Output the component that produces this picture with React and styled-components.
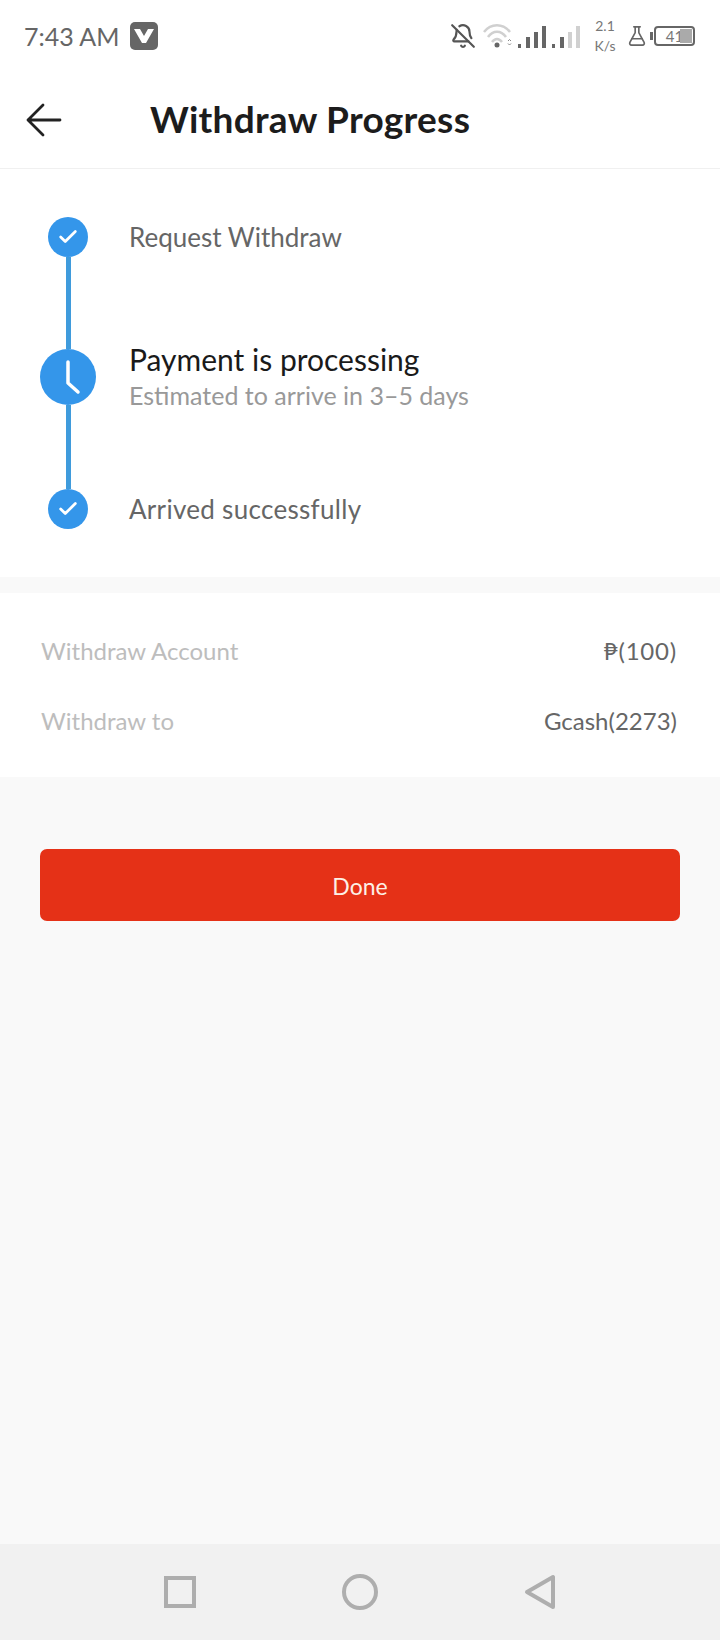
import React from 'react';
import styled, { createGlobalStyle } from 'styled-components';
import { BellOff, Check, FlaskConical } from 'lucide-react';

const GlobalStyle = createGlobalStyle`
  html, body {
    margin: 0;
    padding: 0;
    background: #fff;
  }
  * {
    box-sizing: border-box;
  }
`;

const Screen = styled.div`
  width: 720px;
  height: 1640px;
  display: flex;
  flex-direction: column;
  font-family: Lato, "Noto Sans", sans-serif;
  background: #f9f9f9;
  overflow: hidden;
`;

const StatusBar = styled.div`
  height: 76px;
  padding: 0 25px 4px 24px;
  background: #fff;
  display: flex;
  align-items: center;
  justify-content: space-between;
  color: #666;
`;

const StatusLeft = styled.div`
  display: flex;
  align-items: center;
  gap: 11px;
`;

const Clock = styled.span`
  font-size: 25px;
  font-weight: 400;
`;

const AppBadge = styled.div`
  width: 28px;
  height: 28px;
  border-radius: 5px;
  background: #666;
  display: flex;
  align-items: center;
  justify-content: center;
`;

const StatusRight = styled.div`
  display: flex;
  align-items: center;
`;

const Speed = styled.div`
  width: 24px;
  margin: 0 9px 0 12px;
  font-size: 14px;
  line-height: 20px;
  text-align: center;
  color: #777;
`;

const Battery = styled.div`
  position: relative;
  width: 41px;
  height: 20px;
  margin-left: 6px;
  border: 2px solid #666;
  border-radius: 4px;
  display: flex;
  justify-content: center;
  align-items: center;
  font-size: 15px;
  color: #777;

  &::before {
    content: '';
    position: absolute;
    left: -6px;
    top: 4px;
    width: 3px;
    height: 8px;
    background: #666;
  }

  &::after {
    content: '';
    position: absolute;
    right: 1px;
    top: 1px;
    bottom: 1px;
    width: 12px;
    background: #aaa;
  }
`;

const Header = styled.header`
  height: 93px;
  padding: 0 0 8px 25px;
  background: #fff;
  border-bottom: 1px solid #f0f0f0;
  display: flex;
  align-items: center;
`;

const BackButton = styled.button`
  width: 38px;
  height: 38px;
  margin-top: 4px;
  padding: 0;
  border: 0;
  background: none;
  color: #222;
  display: flex;
  align-items: center;
  justify-content: center;
`;

const Title = styled.h1`
  margin: 0 0 0 87px;
  font-size: 37px;
  font-weight: 700;
  letter-spacing: 0.25px;
  color: #1c1c1c;
`;

const StepsCard = styled.section`
  background: #fff;
  padding: 48px 40px 48px;
  display: flex;
  flex-direction: column;
`;

const Step = styled.div`
  display: flex;
  align-items: center;
  height: ${(p) => (p.$active ? 56 : 40)}px;
`;

const MarkerSlot = styled.div`
  width: 56px;
  margin-right: 33px;
  display: flex;
  justify-content: center;
  flex-shrink: 0;
`;

const Marker = styled.div`
  width: ${(p) => (p.$active ? 56 : 40)}px;
  height: ${(p) => (p.$active ? 56 : 40)}px;
  border-radius: 50%;
  background: #3496ea;
  display: flex;
  align-items: center;
  justify-content: center;
  color: #fff;
`;

const Connector = styled.div`
  width: 5px;
  height: ${(p) => p.$height}px;
  margin-left: 26px;
  background: #3f9bdc;
`;

const StepText = styled.div`
  display: flex;
  flex-direction: column;
`;

const StepLabel = styled.span`
  font-size: ${(p) => (p.$active ? 30 : 26)}px;
  line-height: 36px;
  color: ${(p) => (p.$active ? '#1a1a1a' : '#666')};
  letter-spacing: ${(p) => p.$spacing || 0}px;
`;

const StepHint = styled.span`
  font-size: 25px;
  line-height: 36px;
  color: #999;
`;

const InfoCard = styled.section`
  margin-top: 16px;
  padding: 22px 43px 22px 41px;
  background: #fff;
`;

const InfoRow = styled.div`
  height: 70px;
  display: flex;
  align-items: center;
  justify-content: space-between;
  font-size: 24px;
`;

const InfoKey = styled.span`
  color: #bdbdbd;
`;

const InfoValue = styled.span`
  color: #666;
  letter-spacing: ${(p) => p.$spacing || 0}px;
`;

const Content = styled.main`
  flex: 1;
  padding: 72px 40px 0;
`;

const DoneButton = styled.button`
  width: 640px;
  height: 72px;
  padding: 2px 0 0;
  border: 0;
  border-radius: 7px;
  background: #e53117;
  color: #fdf0e6;
  font-family: inherit;
  font-size: 23px;
`;

const NavBar = styled.nav`
  height: 96px;
  padding: 0 90px;
  background: #f1f1f1;
  display: grid;
  grid-template-columns: repeat(3, 1fr);
  place-items: center;
`;

const NavIcon = styled.svg`
  width: 40px;
  height: 40px;
  fill: none;
  stroke: #aeaeae;
  stroke-width: 4;
`;

const WifiSignal = () => (
  <svg width="98" height="24" viewBox="0 0 98 24" fill="none">
    <path d="M1 8 C8 -1 20 -1 27 8" stroke="#d0d0d0" strokeWidth="2.5" />
    <path d="M5 13 C10 6 18 6 23 13" stroke="#d0d0d0" strokeWidth="2.5" />
    <path d="M9 18 C12 14 16 14 19 18" stroke="#d0d0d0" strokeWidth="2.5" />
    <circle cx="14" cy="21" r="2.5" fill="#666" />
    <path d="M25 17 l1.5 -1.5 l1.5 1.5 M25 19.5 l1.5 1.5 l1.5 -1.5" stroke="#888" strokeWidth="1" />
    <rect x="35" y="20" width="3" height="4" fill="#666" />
    <rect x="43" y="13" width="4" height="11" fill="#666" />
    <rect x="51" y="8" width="4" height="16" fill="#666" />
    <rect x="59" y="2" width="4" height="22" fill="#666" />
    <rect x="69" y="20" width="3" height="4" fill="#666" />
    <rect x="77" y="13" width="4" height="11" fill="#666" />
    <rect x="85" y="8" width="4" height="16" fill="#d0d0d0" />
    <rect x="93" y="2" width="4" height="22" fill="#d0d0d0" />
  </svg>
);

const ClockHands = () => (
  <svg width="56" height="56" viewBox="0 0 56 56" fill="none">
    <path d="M28 13 V34 L38 43" stroke="#fff" strokeWidth="3.5" strokeLinecap="round" strokeLinejoin="round" />
  </svg>
);

const App = () => {
  return (
    <Screen>
      <GlobalStyle />
      <StatusBar>
        <StatusLeft>
          <Clock>7:43 AM</Clock>
          <AppBadge>
            <svg width="20" height="14" viewBox="0 0 20 14">
              <path d="M0 0 H6 L10 7 L14 0 H20 L12 14 H8 Z" fill="#fff" />
            </svg>
          </AppBadge>
        </StatusLeft>
        <StatusRight>
          <BellOff size={26} color="#555" strokeWidth={2} style={{ marginRight: 7 }} />
          <WifiSignal />
          <Speed>
            2.1
            <br />
            K/s
          </Speed>
          <FlaskConical size={22} color="#666" strokeWidth={1.8} />
          <Battery>41</Battery>
        </StatusRight>
      </StatusBar>

      <Header>
        <BackButton aria-label="Back">
          <svg width="38" height="34" viewBox="0 0 38 34" fill="none" stroke="currentColor" strokeWidth="2.8" strokeLinecap="round" strokeLinejoin="round">
            <path d="M35 17 H3 M18 2 L3 17 L18 32" />
          </svg>
        </BackButton>
        <Title>Withdraw Progress</Title>
      </Header>

      <StepsCard>
        <Step>
          <MarkerSlot>
            <Marker>
              <Check size={22} strokeWidth={3} />
            </Marker>
          </MarkerSlot>
          <StepLabel>Request Withdraw</StepLabel>
        </Step>
        <Connector $height={92} />
        <Step $active>
          <MarkerSlot>
            <Marker $active>
              <ClockHands />
            </Marker>
          </MarkerSlot>
          <StepText>
            <StepLabel $active>Payment is processing</StepLabel>
            <StepHint>Estimated to arrive in 3–5 days</StepHint>
          </StepText>
        </Step>
        <Connector $height={84} />
        <Step>
          <MarkerSlot>
            <Marker>
              <Check size={22} strokeWidth={3} />
            </Marker>
          </MarkerSlot>
          <StepLabel $spacing={0.3}>Arrived successfully</StepLabel>
        </Step>
      </StepsCard>

      <InfoCard>
        <InfoRow>
          <InfoKey>Withdraw Account</InfoKey>
          <InfoValue $spacing={0.8}>₱(100)</InfoValue>
        </InfoRow>
        <InfoRow>
          <InfoKey>Withdraw to</InfoKey>
          <InfoValue>Gcash(2273)</InfoValue>
        </InfoRow>
      </InfoCard>

      <Content>
        <DoneButton>Done</DoneButton>
      </Content>

      <NavBar>
        <NavIcon viewBox="0 0 40 40">
          <rect x="6" y="6" width="28" height="28" />
        </NavIcon>
        <NavIcon viewBox="0 0 40 40">
          <circle cx="20" cy="20" r="16" />
        </NavIcon>
        <NavIcon viewBox="0 0 40 40">
          <path d="M33 5 V35 L7 20 Z" strokeLinejoin="round" />
        </NavIcon>
      </NavBar>
    </Screen>
  );
};

export default App;
